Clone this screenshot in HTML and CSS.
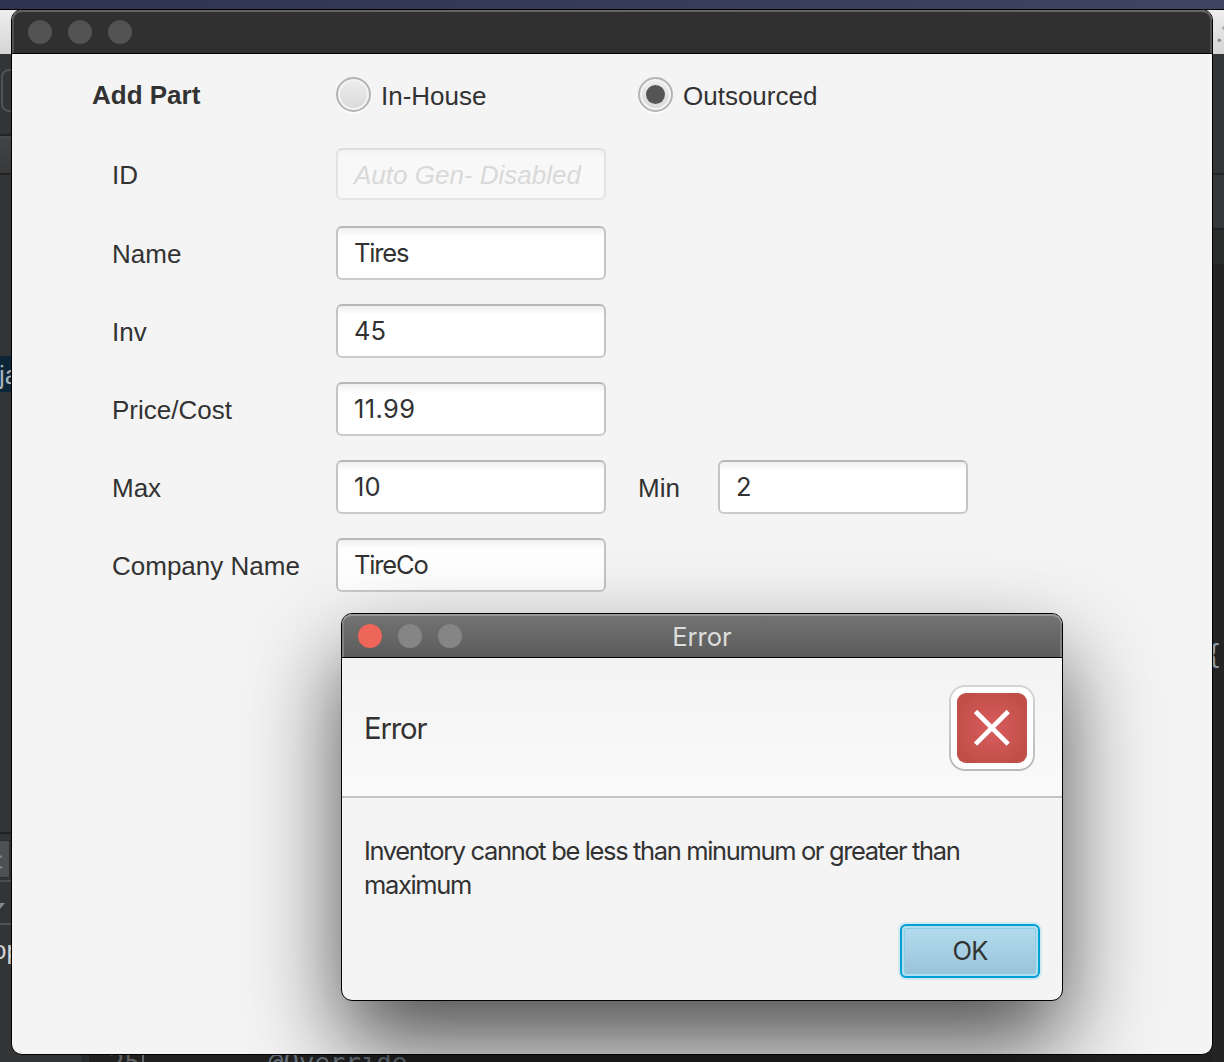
FILE: index.html
```html
<!DOCTYPE html>
<html lang="en">
<head>
<meta charset="utf-8">
<title>Add Part</title>
<link rel="stylesheet" href="styles.css">
</head>
<body>
<div class="desktop">
  <div class="menubar"></div>
  <div class="ide-toolbar"><svg width="11" height="44" viewBox="0 0 11 44"><circle cx="6.3" cy="30.3" r="1.8" fill="#909090"/><circle cx="11" cy="18" r="1.8" fill="#a0a0a0"/></svg></div>
  <div class="ide">
    <div class="sidebar">
      <div class="side-tools"><span class="side-button"></span></div>
      <div class="side-tab"></div>
      <div class="side-tree"></div>
      <div class="side-selected">ja</div>
      <div class="side-empty"></div>
      <div class="side-box"><svg width="5" height="18" viewBox="0 0 5 18"><path d="M0 4L2 3M0 14L2 15" stroke="#85888a" stroke-width="2"/></svg></div>
      <div class="side-filter"><svg width="5" height="6" viewBox="0 0 5 6"><path d="M0 0H5L0 6Z" fill="#85888a"/></svg></div>
      <div class="side-list">op</div>
    </div>
    <div class="editor">
      <div class="code"><span class="gutter">25<i></i></span><span class="override">@Override</span></div>
    </div>
    <div class="rail">
      <div class="rail-top"></div>
      <div class="rail-tab"></div>
      <div class="rail-crumb"></div>
      <div class="rail-code">{</div>
    </div>
  </div>

  <section class="window main-window">
    <header class="titlebar"><span class="light"></span><span class="light"></span><span class="light"></span></header>
    <div class="form">
      <h1 class="heading">Add Part</h1>
      <div class="option"><span class="radio"></span><span>In-House</span></div>
      <div class="option wide"><span class="radio checked"></span><span>Outsourced</span></div>
      <span class="label id-label">ID</span><div class="field disabled">Auto Gen- Disabled</div>
      <span class="label">Name</span><div class="field">Tires</div>
      <span class="label">Inv</span><div class="field number">45</div>
      <span class="label">Price/Cost</span><div class="field number price">11.99</div>
      <span class="label">Max</span><div class="field number">10</div>
      <span class="label min-label">Min</span><div class="field number min-field">2</div>
      <span class="label">Company Name</span><div class="field">TireCo</div>
    </div>
  </section>

  <section class="window dialog">
    <header class="titlebar"><span class="light close"></span><span class="light"></span><span class="light"></span><span class="title">Error</span></header>
    <div class="dialog-header">
      <h2 class="dialog-heading">Error</h2>
      <svg class="error-icon" width="86" height="86" viewBox="0 0 86 86">
        <defs>
          <radialGradient id="red" cx=".5" cy=".5" r=".56"><stop offset="0" stop-color="#d95c5c"/><stop offset="1" stop-color="#c04f49"/></radialGradient>
          <linearGradient id="rim" x1="0" y1="0" x2="0" y2="1"><stop offset="0" stop-color="#d4d4d4"/><stop offset="1" stop-color="#bababa"/></linearGradient>
        </defs>
        <rect width="86" height="86" rx="16" fill="url(#rim)"/>
        <rect x="2" y="2" width="82" height="82" rx="14" fill="#fff"/>
        <rect x="8" y="8" width="70" height="70" rx="9" fill="url(#red)"/>
        <path d="M26.5 26.5L59.2 59.2M59.2 26.5L26.5 59.2" stroke="#fff" stroke-width="4.6"/>
      </svg>
    </div>
    <div class="dialog-body">
      <p class="message">Inventory cannot be less than minumum or greater than<br>maximum</p>
      <div class="actions"><button class="ok">OK</button></div>
    </div>
  </section>
</div>
</body>
</html>
```
FILE: styles.css
```css
* { box-sizing: border-box; }
body { margin: 0; color: #323232; font: 26px "Liberation Sans", Arial, sans-serif; }
.desktop { position: relative; width: 1224px; height: 1062px; overflow: hidden; display: flex; flex-direction: column; background: #232323; }
.menubar { height: 10px; flex: none; background: linear-gradient(90deg, #2d3350, #3e4560); border-bottom: 1px solid #000; }
.ide-toolbar { height: 44px; flex: none; background: linear-gradient(#eee, #d5d5d5); display: flex; justify-content: flex-end; }
.ide { flex: 1; min-height: 0; display: flex; }
.sidebar { width: 83px; display: flex; flex-direction: column; background: #323435; border-right: 1px solid #242424; }
.sidebar > div { flex: none; }
.side-tools { height: 82px; padding: 15px 0 0 1px; border-bottom: 2px solid #222425; }
.side-button { display: block; width: 40px; height: 43px; border: 2px solid #515354; border-radius: 8px; }
.side-tab { height: 39px; border-top: 2px solid #46484a; border-bottom: 2px solid #222; background: linear-gradient(#414345, #38393b); }
.side-tree { height: 181px; }
.side-selected { height: 36px; background: #0c2638; color: #a9b2b9; font-size: 26px; line-height: 38px; text-indent: -1px; }
.side-empty { height: 442px; border-bottom: 2px solid #202223; }
.side-box { height: 38px; width: 10px; margin: 6px 0 2px; padding-top: 8px; background: #4d5153; border: 1px solid #292b2c; border-left: 0; line-height: 1; }
.side-filter { height: 45px; border-top: 2px solid #4b4d4e; border-bottom: 2px solid #515354; padding-top: 18px; line-height: 0; }
.side-list { color: #d0d1d1; font-size: 26px; line-height: 50px; text-indent: -8px; }
.editor { flex: 1; display: flex; align-items: flex-end; background: #202020; border-left: 6px solid #292a2b; }
.code { display: flex; height: 12px; font: 25.7px/26px "DejaVu Sans Mono", monospace; color: #66717c; white-space: nowrap; }
.gutter { width: 179px; padding-left: 20px; color: #606264; display: flex; }
.gutter i { width: 2px; height: 12px; margin: 4px 0 0 2px; background: #666; }
.rail { width: 12px; flex: none; display: flex; flex-direction: column; background: #242424; }
.rail-top { height: 121px; background: #333637; border-bottom: 2px solid #222425; }
.rail-tab { height: 55px; background: #35383a; border-bottom: 2px solid #202223; }
.rail-crumb { height: 34px; background: #2a2b2b; }
.rail-code { padding-top: 375px; margin-left: -6px; font: 25.7px/30px "DejaVu Sans Mono", monospace; color: #8b9aa7; }

.window { position: absolute; border: 1px solid #000; border-radius: 11px; overflow: hidden; background: #f4f4f4; }
.main-window { left: 11px; top: 9px; width: 1202px; height: 1046px; }
.dialog { left: 341px; top: 613px; width: 722px; height: 388px; display: flex; flex-direction: column; box-shadow: 0 44px 92px rgba(0, 0, 0, .68); }
.titlebar { display: flex; flex: none; align-items: center; gap: 16px; height: 44px; padding: 1px 16px 0; background: #303030; border-bottom: 1px solid #000; border-radius: 10px 10px 0 0; box-shadow: inset 0 2px #646464, inset 2px 0 #505050, inset -2px 0 #505050; }
.light { width: 24px; height: 24px; border-radius: 50%; background: #525252; }
.dialog .titlebar { background: linear-gradient(#747474, #5b5b5b); box-shadow: inset 0 2px #999, inset 2px 0 #808080, inset -2px 0 #808080; }
.dialog .light { background: #858585; }
.dialog .close { background: #ee6559; }
.title { flex: 1; margin-right: 120px; padding-top: 2px; text-align: center; color: #dedede; font: 25.5px/30px Inter, sans-serif; }

.form { display: grid; grid-template-columns: 244px 302px 80px 250px; grid-template-rows: 81px 79px repeat(5, 78px); align-items: center; padding-left: 80px; }
.heading { margin: 0; font-size: 26px; font-weight: bold; line-height: 30px; }
.option { display: flex; align-items: center; gap: 10px; line-height: 30px; }
.option span:last-child { padding-top: 3px; }
.wide { grid-column: span 2; }
.radio { display: flex; align-items: center; justify-content: center; width: 35px; height: 35px; border: 2px solid #b5b5b5; border-radius: 50%; background: linear-gradient(#ededed, #d9d9d9); box-shadow: inset 0 0 0 2px #f4f4f4, 0 2px #fcfcfc; }
.checked::before { content: ""; width: 19px; height: 19px; border-radius: 50%; background: #555; }
.label { grid-column: 1; padding: 2px 0 0 20px; line-height: 30px; white-space: nowrap; }
.id-label { padding-bottom: 2px; }
.field { width: 270px; height: 54px; padding: 0 16px; border: 2px solid; border-color: #b8b8b8 #c4c4c4 #cbcbcb; border-radius: 6px; background: linear-gradient(#efefef, #fff 9px); font: 25.5px/50px Inter, sans-serif; letter-spacing: -1.15px; white-space: nowrap; }
.number { letter-spacing: .1px; }
.price { letter-spacing: .4px; }
.disabled { height: 52px; margin-bottom: 1px; border-color: #ddd #e2e2e2 #e5e5e5; background: linear-gradient(#f2f2f2, #f8f8f8 9px); color: #d9d9d9; font: italic 26px/50px "Liberation Sans", Arial, sans-serif; letter-spacing: 0; }
.min-label { grid-column: 3; padding-left: 0; }
.min-field { width: 250px; }

.dialog-header { display: flex; flex: none; align-items: flex-start; justify-content: space-between; height: 140px; padding: 27px 27px 0 22px; border-bottom: 2px solid #c4c4c4; background: linear-gradient(#f3f3f3, #fafafa); }
.dialog-heading { margin: 26px 0 0; font: 29.3px/36px Inter, sans-serif; letter-spacing: -1.2px; }
.dialog-body { display: flex; flex: 1; flex-direction: column; justify-content: space-between; padding: 36px 22px 22px; }
.message { margin: 0; font: 25.5px/34px Inter, sans-serif; letter-spacing: -1.36px; white-space: nowrap; }
.actions { display: flex; justify-content: flex-end; }
.ok { width: 140px; height: 54px; padding: 0; border: 2px solid #009fd8; border-radius: 6px; background: linear-gradient(#b2dcee, #9bc3d8); box-shadow: inset 0 0 0 2px #b0dff0, inset 0 0 0 3px #8fcbe2, 0 0 0 2px #d2e9f1; color: #323232; font: 25.5px/50px Inter, sans-serif; letter-spacing: -.8px; }
```
